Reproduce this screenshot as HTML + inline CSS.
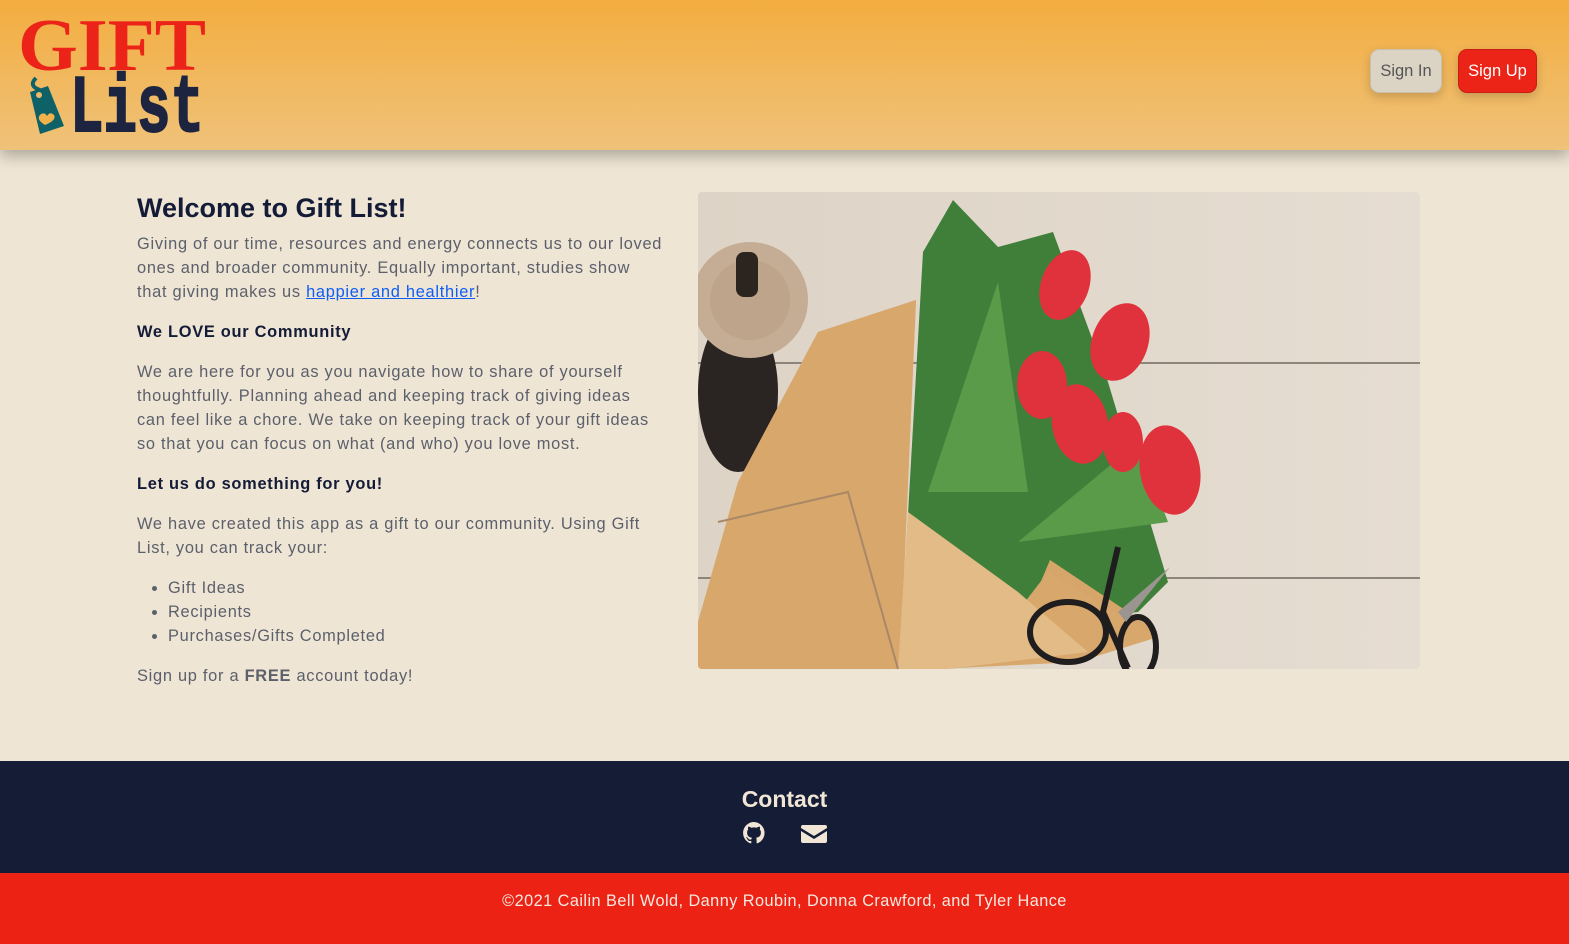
<!DOCTYPE html>
<html><head><meta charset="utf-8">
<style>
*{margin:0;padding:0;box-sizing:border-box}
html,body{width:1569px;height:944px;overflow:hidden}
body{background:#efe5d5;font-family:"Liberation Sans",sans-serif;color:#5b606b;position:relative}
header{position:absolute;left:0;top:0;width:1569px;height:150px;background:linear-gradient(#f3ad3f,#efc27a);box-shadow:0 6px 14px rgba(0,0,0,.28);z-index:2}
.btn{position:absolute;top:49px;height:44px;border-radius:9px;font-size:16.5px;line-height:42px;text-align:center;box-shadow:0 4px 10px rgba(0,0,0,.18)}
.in{left:1370px;width:72px;background:#dbd3c3;border:1px solid #cbbfa9;color:#555}
.up{left:1458px;width:79px;background:#ec2417;border:1px solid #c81e14;color:#fff}
.txt{position:absolute;left:137px;top:192px;width:560px;font-size:16.4px;letter-spacing:.72px;line-height:24px;white-space:nowrap}
h1{font-size:27px;color:#131b37;letter-spacing:0;font-weight:bold;line-height:32px;margin-bottom:8px}
.txt p{margin-bottom:16px}
.txt b{color:#131b37}
a{color:#0d5ef5;text-decoration:underline}
ul{margin-left:31px;margin-bottom:16px}
.pic{position:absolute;left:698px;top:192px;width:722px;height:477px;border-radius:4px;overflow:hidden}
footer{position:absolute;left:0;top:761px;width:1569px;height:112px;background:#141c36;text-align:center}
footer h2{color:#f1e6d6;font-size:23px;padding-top:25px;font-weight:bold}
.copy{position:absolute;left:0;top:873px;width:1569px;height:71px;background:#ec2214;color:#f7e9e0;text-align:center;font-size:16.3px;line-height:56px;letter-spacing:.45px}
</style></head><body>
<header>
<svg width="230" height="150" style="position:absolute;left:0;top:0">
<text x="18" y="70" font-family="Liberation Serif" font-size="74" font-weight="bold" fill="#ec2318" textLength="188" lengthAdjust="spacingAndGlyphs">GIFT</text>
<text x="70" y="131" font-family="Liberation Mono" font-size="82" font-weight="bold" fill="#1d2440" stroke="#1d2440" stroke-width="2" textLength="134" lengthAdjust="spacingAndGlyphs">List</text>
<path d="M36 78 q-8 8 4 12" stroke="#0e6167" stroke-width="4" fill="none"/>
<path d="M30 92 l18 -6 l16 40 l-24 8 z" fill="#0e6167"/>
<circle cx="39" cy="95" r="3" fill="#efb868"/>
<path d="M45 125 q-10 -6 -4 -11 q4 -2 6 2 q3 -5 7 -1 q3 5 -9 10z" fill="#f0b24c"/>
</svg>
<div class="btn in">Sign In</div>
<div class="btn up">Sign Up</div>
</header>
<div class="txt">
<h1>Welcome to Gift List!</h1>
<p>Giving of our time, resources and energy connects us to our loved<br>ones and broader community. Equally important, studies show<br>that giving makes us <a>happier and healthier</a>!</p>
<p><b>We LOVE our Community</b></p>
<p>We are here for you as you navigate how to share of yourself<br>thoughtfully. Planning ahead and keeping track of giving ideas<br>can feel like a chore. We take on keeping track of your gift ideas<br>so that you can focus on what (and who) you love most.</p>
<p><b>Let us do something for you!</b></p>
<p>We have created this app as a gift to our community. Using Gift<br>List, you can track your:</p>
<ul><li>Gift Ideas</li><li>Recipients</li><li>Purchases/Gifts Completed</li></ul>
<p>Sign up for a <b style="color:#5b606b">FREE</b> account today!</p>
</div>
<div class="pic">
<svg width="722" height="477" viewBox="0 0 722 477">
<defs><linearGradient id="w" x1="0" x2="1"><stop offset="0" stop-color="#ddd3c6"/><stop offset="1" stop-color="#e6ddd2"/></linearGradient></defs>
<rect width="722" height="477" fill="url(#w)"/>
<line x1="0" y1="171" x2="722" y2="171" stroke="#8d857c" stroke-width="2"/>
<line x1="0" y1="386" x2="722" y2="386" stroke="#8d857c" stroke-width="2"/>
<ellipse cx="40" cy="200" rx="40" ry="80" fill="#2a2522"/>
<circle cx="52" cy="108" r="58" fill="#c4ad94"/>
<circle cx="52" cy="108" r="40" fill="#b59c80" opacity=".5"/>
<rect x="38" y="60" width="22" height="45" rx="8" fill="#2c241f"/>
<path d="M205 410 L225 60 L255 8 L300 55 L355 40 L410 190 L470 390 L440 420 L300 440Z" fill="#3f7f39"/>
<path d="M230 300 L300 90 L330 300Z M320 350 L440 250 L470 330Z" fill="#5a9b4a"/>
<g fill="#e0323c">
<ellipse cx="367" cy="93" rx="24" ry="36" transform="rotate(20 367 93)"/>
<ellipse cx="422" cy="150" rx="28" ry="40" transform="rotate(20 422 150)"/>
<ellipse cx="344" cy="193" rx="25" ry="34"/>
<ellipse cx="382" cy="232" rx="28" ry="40" transform="rotate(-10 382 232)"/>
<ellipse cx="472" cy="278" rx="30" ry="45" transform="rotate(-10 472 278)"/>
<ellipse cx="425" cy="250" rx="20" ry="30"/>
</g>
<path d="M0 477 L0 430 L40 290 L120 140 L218 108 L205 405 L300 445 L460 440 L352 368 L330 420 L240 477Z" fill="#d6a56a"/>
<path d="M0 477 L0 430 L40 290 L120 140 L218 108 L205 405 L300 445 L350 380 L460 445 L380 470 L240 477Z" fill="#d8a76c"/>
<path d="M210 320 L320 400 L390 460 L250 477 L200 477Z" fill="#e2bb87"/>
<path d="M20 330 L150 300 L200 477" stroke="#a88866" stroke-width="2" fill="none"/>
<g stroke="#1f1d1e" stroke-width="6" fill="none">
<path d="M420 355 L405 420 L430 476"/>
<ellipse cx="370" cy="440" rx="38" ry="30"/>
<ellipse cx="440" cy="455" rx="18" ry="30"/>
</g>
<path d="M420 420 L472 375 L428 430Z" fill="#9a9590"/>
</svg>
</div>
<footer>
<h2>Contact</h2>
<svg width="100" height="30" style="margin-top:6px">
<path d="M12 3a11 11 0 0 0-3.5 21.4c.6.1.8-.2.8-.5v-2c-3 .7-3.7-1.3-3.7-1.3-.5-1.3-1.2-1.6-1.2-1.6-1-.7.1-.7.1-.7 1.1.1 1.7 1.1 1.7 1.1 1 1.7 2.6 1.2 3.2.9.1-.7.4-1.2.7-1.5-2.4-.3-5-1.2-5-5.4 0-1.2.4-2.2 1.1-2.9-.1-.3-.5-1.4.1-2.9 0 0 .9-.3 3 1.1a10 10 0 0 1 5.4 0c2.1-1.4 3-1.1 3-1.1.6 1.5.2 2.6.1 2.9.7.8 1.1 1.7 1.1 2.9 0 4.2-2.6 5.1-5 5.4.4.3.7 1 .7 2v3c0 .3.2.6.8.5A11 11 0 0 0 12 3z" fill="#f1e6d6" transform="translate(7,0)"/>
<path d="M62 6h22a2 2 0 0 1 2 2v1l-13 8-13-8v-1a2 2 0 0 1 2-2zM60 12l13 8 13-8v10a2 2 0 0 1-2 2H62a2 2 0 0 1-2-2z" fill="#f1e6d6" transform="translate(6,0)"/>
</svg>
</footer>
<div class="copy">©2021 Cailin Bell Wold, Danny Roubin, Donna Crawford, and Tyler Hance</div>
</body></html>
